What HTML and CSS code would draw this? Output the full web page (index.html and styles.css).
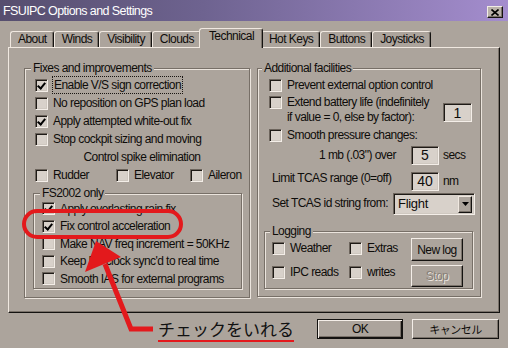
FILE: index.html
```html
<!DOCTYPE html>
<html lang="en">
<head>
<meta charset="utf-8">
<title>FSUIPC Options and Settings</title>
<link rel="stylesheet" href="styles.css">
</head>
<body>
<div class="win">
  <div class="titlebar">
    <span class="title">FSUIPC Options and Settings</span>
    <span class="close"><svg width="8" height="7" viewBox="0 0 8 7"><path d="M0.5 0.5L7.5 6.5M7.5 0.5L0.5 6.5" stroke="#000" stroke-width="1.6" fill="none"/></svg></span>
  </div>
  <div class="tabs">
    <div class="tab">About</div>
    <div class="tab">Winds</div>
    <div class="tab">Visibility</div>
    <div class="tab">Clouds</div>
    <div class="tab sel">Technical</div>
    <div class="tab">Hot Keys</div>
    <div class="tab">Buttons</div>
    <div class="tab">Joysticks</div>
  </div>
  <div class="panel">
    <div class="group g-fixes">
      <div class="glabel">Fixes and improvements</div>
      <div class="fix-rows">
        <div class="row"><span class="cb on"></span><span class="focus">Enable V/S sign correction</span></div>
        <div class="row"><span class="cb"></span>No reposition on GPS plan load</div>
        <div class="row"><span class="cb on"></span>Apply attempted white-out fix</div>
        <div class="row"><span class="cb"></span>Stop cockpit sizing and moving</div>
        <div class="row center">Control spike elimination</div>
        <div class="row">
          <span class="item w-rudder"><span class="cb"></span>Rudder</span>
          <span class="item w-elev"><span class="cb"></span>Elevator</span>
          <span class="item"><span class="cb"></span>Aileron</span>
        </div>
      </div>
      <div class="group g-fs">
        <div class="glabel gl-fs">FS2002 only</div>
        <div class="fs-rows">
          <div class="row"><span class="cb on"></span>Apply overlasting rain fix</div>
          <div class="row"><span class="cb on"></span>Fix control acceleration</div>
          <div class="row"><span class="cb"></span>Make NAV freq increment = 50KHz</div>
          <div class="row"><span class="cb"></span>Keep FS clock sync'd to real time</div>
          <div class="row"><span class="cb"></span>Smooth IAS for external programs</div>
        </div>
      </div>
    </div>

    <div class="group g-add">
      <div class="glabel gl-add">Additional facilities</div>
      <div class="row r-prevent"><span class="cb"></span>Prevent external option control</div>
      <div class="r-extend">
        <span class="cb"></span>
        <div class="extend-text">Extend battery life (indefinitely<br>if value = 0, else by factor):</div>
        <span class="field f-factor">1</span>
      </div>
      <div class="row r-smooth"><span class="cb"></span>Smooth pressure changes:</div>
      <div class="r-num r-mb"><span class="lbl lbl-mb">1 mb (.03") over</span><span class="field f-num">5</span><span class="unit">secs</span></div>
      <div class="r-num r-tcas"><span class="lbl lbl-tcas">Limit TCAS range (0=off)</span><span class="field f-num">40</span><span class="unit">nm</span></div>
      <div class="r-num r-id">
        <span class="lbl lbl-id">Set TCAS id string from:</span>
        <span class="select"><span class="sel-val">Flight</span><span class="sel-btn"><svg width="7" height="4" viewBox="0 0 7 4"><path d="M0 0H7L3.5 4Z" fill="#000"/></svg></span></span>
      </div>
      <div class="group g-log">
        <div class="glabel gl-log">Logging</div>
        <div class="log-body">
          <div class="log-checks">
            <div class="row"><span class="item w-weather"><span class="cb"></span>Weather</span><span class="item"><span class="cb"></span>Extras</span></div>
            <div class="row r-ipc"><span class="item w-weather"><span class="cb"></span>IPC reads</span><span class="item"><span class="cb"></span>writes</span></div>
          </div>
          <div class="log-btns">
            <span class="btn b-newlog">New log</span>
            <span class="btn b-stop">Stop</span>
          </div>
        </div>
      </div>
    </div>
  </div>

  <div class="footer">
    <span class="jp">チェックをいれる</span>
    <span class="btn b-ok">OK</span>
    <span class="btn b-cancel">キャンセル</span>
  </div>

  <svg class="annot" width="508" height="348" viewBox="0 0 508 348">
    <rect x="24" y="211" width="157" height="26" rx="13" fill="none" stroke="#e3191c" stroke-width="4"/>
    <polyline points="105,264 131,329 153,329" fill="none" stroke="#e3191c" stroke-width="5"/>
    <polygon points="96,241 85,272 121,257" fill="#e3191c"/>
  </svg>
</div>
</body>
</html>
```

FILE: styles.css
```css
* { box-sizing: border-box; }
html, body { margin: 0; padding: 0; }
body {
  width: 508px;
  height: 348px;
  overflow: hidden;
  background: #aca49c;
  font-family: "Liberation Sans", Arial, sans-serif;
  font-size: 12px;
  letter-spacing: -0.55px;
  line-height: 14px;
  color: #0e0c0a;
}
.win {
  position: relative;
  width: 508px;
  height: 348px;
  background: #aca49c;
}

/* title bar */
.titlebar {
  height: 21px;
  display: flex;
  align-items: flex-start;
  justify-content: space-between;
  padding: 1px 5px 0 3px;
  background: linear-gradient(to right, #564e6e 0%, #6e6390 40%, #a48dce 100%);
  color: #fff;
}
.title { font-size: 12.5px; letter-spacing: -0.6px; line-height: 20px; }
.close {
  margin-top: 5px;
  width: 16px;
  height: 12px;
  display: flex;
  align-items: center;
  justify-content: center;
  background: #bab2aa;
  border: 1px solid;
  border-color: #f2ece6 #141210 #141210 #f2ece6;
  box-shadow: inset -1px -1px 0 #7a726a;
}

/* tabs */
.tabs {
  display: flex;
  align-items: flex-end;
  height: 26px;
  padding-left: 10px;
}
.tab {
  height: 16px;
  padding: 0 6px 0 7px;
  border: 1px solid;
  border-bottom: 0;
  border-color: #f0e8e0 #141210 transparent #f0e8e0;
  border-radius: 3px 3px 0 0;
  box-shadow: inset -1px 0 0 #7a726a;
  line-height: 14px;
  white-space: nowrap;
}
.tab.sel {
  height: 20px;
  margin: 0 -2px -1px;
  padding: 0 8px 0 9px;
  position: relative;
  z-index: 1;
  background: #aca49c;
}

/* panel */
.panel {
  margin-left: 8px;
  width: 492px;
  height: 266px;
  border: 1px solid;
  border-color: #f0e8e0 #141210 #141210 #f0e8e0;
  box-shadow: inset -1px -1px 0 #7a726a;
  display: flex;
  align-items: flex-start;
  gap: 7px;
  padding: 20px 0 0 15px;
}

/* group boxes */
.group {
  border: 1px solid #776f67;
  box-shadow: inset 1px 1px 0 #ebe4dd, 1px 1px 0 #ebe4dd;
}
.glabel {
  display: table;
  height: 14px;
  margin: -8px 0 0 6px;
  padding: 0 2px;
  background: #aca49c;
  white-space: nowrap;
}
.g-fixes { width: 226px; height: 230px; }
.g-add { width: 224px; height: 229px; }
.gl-add { margin-left: 4px; }

.row {
  display: flex;
  align-items: center;
  gap: 5px;
  height: 18px;
  white-space: nowrap;
}
.row.center { justify-content: center; }
.item { display: flex; align-items: center; gap: 5px; }

.fix-rows { padding: 1px 0 0 10px; }
.w-rudder { width: 76px; }
.w-elev { width: 69px; }

.g-fs {
  width: 209px;
  height: 96px;
  margin: 9px 0 0 8px;
}
.fs-rows { padding-left: 8px; }
.fs-rows .row { height: 17.5px; }

.focus {
  outline: 1px dotted #1a1612;
  outline-offset: 0;
  padding: 1px 1px;
}

/* checkbox */
.cb {
  flex: none;
  position: relative;
  width: 13px;
  height: 13px;
  background: #d8d1ca;
  border: 1px solid;
  border-color: #6c645c #f4eee8 #f4eee8 #6c645c;
  box-shadow: inset 1px 1px 0 #1e1a16, inset -1px -1px 0 #cfc8c0;
}
.cb.on::after {
  content: "";
  position: absolute;
  left: 3px;
  top: 1px;
  width: 3px;
  height: 6px;
  border: solid #000;
  border-width: 0 2px 2px 0;
  transform: rotate(40deg);
}

/* right column */
.r-prevent { margin-top: 1px; padding-left: 11px; }
.r-extend {
  display: flex;
  height: 30px;
  margin-top: 1px;
  padding-left: 11px;
}
.r-extend .cb { margin-top: 1px; }
.extend-text { line-height: 15px; padding-left: 5px; white-space: nowrap; }
.f-factor {
  width: 29px;
  height: 19px;
  margin: 0 8px 3px auto;
  align-self: flex-end;
}
.r-smooth { margin-top: 2px; height: 16px; padding-left: 11px; }

.r-num { display: flex; align-items: center; white-space: nowrap; }
.r-mb { margin-top: 2px; height: 20px; }
.r-tcas { margin-top: 6px; height: 20px; }
.r-id { margin-top: 2px; height: 22px; }
.lbl { flex: none; }
.lbl-mb { width: 153px; padding-left: 61px; }
.lbl-tcas { width: 153px; padding-left: 14px; align-self: flex-start; }
.lbl-id { width: 135px; padding-left: 14px; align-self: flex-start; margin-top: 3px; }
.unit { margin-left: 4px; }

.field {
  display: flex;
  align-items: center;
  justify-content: center;
  background: #d8d1ca;
  border: 1px solid;
  border-color: #6c645c #f4eee8 #f4eee8 #6c645c;
  box-shadow: inset 1px 1px 0 #1e1a16, inset -1px -1px 0 #cfc8c0;
  font-size: 14px;
  letter-spacing: 0;
}
.f-num { width: 28px; height: 19px; }

.select {
  display: flex;
  align-items: center;
  width: 82px;
  height: 22px;
  padding: 2px;
  background: #d8d1ca;
  border: 1px solid;
  border-color: #6c645c #f4eee8 #f4eee8 #6c645c;
  box-shadow: inset 1px 1px 0 #1e1a16, inset -1px -1px 0 #cfc8c0;
}
.sel-val { flex: 1; padding-left: 2px; font-size: 13px; letter-spacing: -0.3px; }
.sel-btn {
  width: 14px;
  height: 17px;
  display: flex;
  align-items: center;
  justify-content: center;
  background: #aca49c;
  border: 1px solid;
  border-color: #f0e8e0 #141210 #141210 #f0e8e0;
  box-shadow: inset -1px -1px 0 #7a726a;
}

.g-log {
  width: 209px;
  height: 58px;
  margin: 16px 0 0 6px;
}
.gl-log { margin-left: 5px; }
.log-body { display: flex; }
.log-checks { padding: 1px 0 0 7px; }
.w-weather { width: 72px; }
.r-ipc { margin-top: 6px; }
.log-btns {
  display: flex;
  flex-direction: column;
  gap: 4px;
  margin: 0 9px 0 auto;
}

/* buttons */
.btn {
  display: flex;
  align-items: center;
  justify-content: center;
  background: #aca49c;
  border: 1px solid;
  border-color: #f4eee8 #141210 #141210 #f4eee8;
  box-shadow: inset -1px -1px 0 #7a726a;
  white-space: nowrap;
}
.b-newlog { width: 52px; height: 23px; }
.b-stop { width: 52px; height: 22px; color: #877f77; text-shadow: 1px 1px 0 #ece6e0; }

.footer {
  display: flex;
  align-items: flex-start;
  height: 35px;
  padding: 6px 9px 0 158px;
}
.jp {
  font-family: "Noto Sans CJK JP", sans-serif;
  font-size: 17px;
  letter-spacing: 0;
  line-height: 20px;
  padding-bottom: 1px;
  border-bottom: 2px solid #e3191c;
  color: #111;
}
.b-ok {
  margin-left: auto;
  width: 86px;
  height: 20px;
  border-color: #141210;
  box-shadow: inset 1px 1px 0 #f4eee8, inset -1px -1px 0 #141210, inset -2px -2px 0 #7a726a;
}
.b-cancel {
  margin-left: 9px;
  width: 87px;
  height: 20px;
  font-family: "Noto Sans CJK JP", sans-serif;
  font-size: 11px;
  letter-spacing: -0.5px;
}

.annot {
  position: absolute;
  left: 0;
  top: 0;
  pointer-events: none;
}
```
